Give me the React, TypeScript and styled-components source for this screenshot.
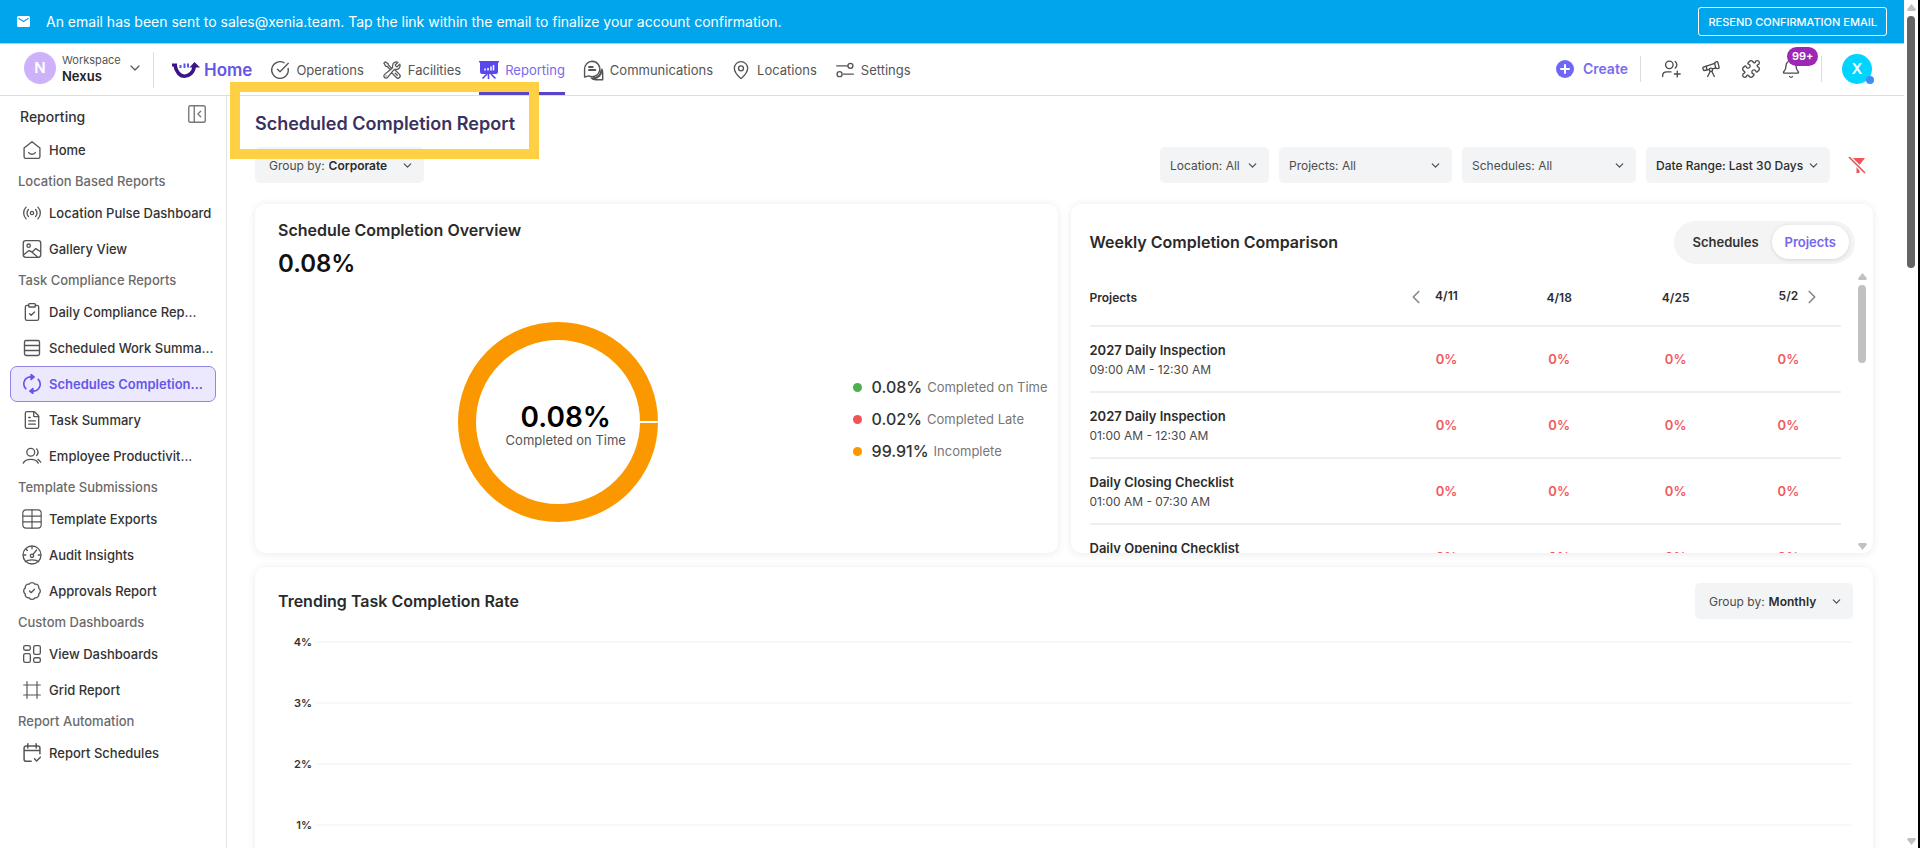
import React, { useState } from "react";
import styled, { createGlobalStyle, css } from "styled-components";
import {
  BadgeCheck,
  Bell,
  ChevronDown,
  ChevronLeft,
  ChevronRight,
  CircleCheckBig,
  ClipboardCheck,
  FileText,
  Frame,
  MapPin,
  PanelLeftClose,
  Puzzle,
  Radio,
  Rows3,
  Telescope,
} from "lucide-react";
import { HiOutlineWrenchScrewdriver } from "react-icons/hi2";

const GlobalStyle = createGlobalStyle`
  *, *::before, *::after { box-sizing: border-box; }
  body { margin: 0; overflow: hidden; background: #fff; }
  body, button, select, table {
    font-family: Inter, "Liberation Sans", sans-serif;
  }
  button, select { margin: 0; padding: 0; border: 0; background: none; color: inherit; cursor: pointer; }
  a { color: inherit; text-decoration: none; }
  h1, h2, p, ul { margin: 0; padding: 0; }
  ul { list-style: none; }
  svg { display: block; flex: none; }
`;

/* ---------- shell ---------- */

const Window = styled.div`
  display: flex;
  height: 100vh;
  overflow: hidden;
  border-right: 2px solid #000;
`;

const Page = styled.div`
  flex: 1;
  min-width: 0;
  display: flex;
  flex-direction: column;
`;

const Body = styled.div`
  flex: 1;
  min-height: 0;
  display: flex;
`;

const ScrollTrack = styled.div<{ $inset?: boolean }>`
  display: flex;
  flex-direction: column;
  align-items: center;
  width: 14px;
  padding: 4px 0 3px;
  background: #fff;
  ${(p) =>
    p.$inset &&
    css`
      width: 12px;
      padding: 2px 0 3px;
    `}
`;

const ScrollThumb = styled.div<{ $inset?: boolean }>`
  width: 8px;
  height: ${(p) => (p.$inset ? 78 : 252)}px;
  margin: 5px 0 auto;
  border-radius: 4px;
  background: ${(p) => (p.$inset ? "#c1c1c1" : "#636363")};
`;

const ScrollArrow = ({ down }: { down?: boolean }) => (
  <svg width="9" height="7" viewBox="0 0 9 7" fill="#c1c1c1">
    <path d={down ? "M1 0h7l1 1.500-4.500 5.500L0 1.500z" : "M4.500 0 9 5.500 8 7H1L0 5.500z"} />
  </svg>
);

/* ---------- banner ---------- */

const Banner = styled.div`
  display: flex;
  align-items: center;
  height: 44px;
  padding: 0 17px;
  gap: 16px;
  background: #00a5ec;
  border-bottom: 1px solid #9adcf8;
  color: #fff;
  font-size: 14px;
`;

const BannerText = styled.p`
  flex: 1;
`;

const ResendButton = styled.button`
  height: 29px;
  padding: 0 9px;
  border: 1px solid #fff;
  border-radius: 3px;
  font-size: 11px;
  font-weight: 500;
`;

/* ---------- header ---------- */

const Header = styled.header`
  display: flex;
  align-items: center;
  height: 52px;
  padding-left: 24px;
  padding-right: 32px;
  border-bottom: 1px solid #dedede;
`;

const Avatar = styled.span<{ $tone: string; $size: number }>`
  display: flex;
  align-items: center;
  justify-content: center;
  width: ${(p) => p.$size}px;
  height: ${(p) => p.$size}px;
  border-radius: 50%;
  background: ${(p) => p.$tone};
  color: #fff;
  font-size: 15px;
  font-weight: 600;
`;

const WorkspaceButton = styled.button`
  display: flex;
  align-items: center;
  gap: 6px;
  width: 129px;
  padding-bottom: 4px;
  text-align: left;
  color: #555;
`;

const WorkspaceName = styled.span`
  font-size: 11px;
  line-height: 16px;

  strong {
    display: block;
    color: #222;
    font-size: 13px;
    font-weight: 600;
  }
`;

const VRule = styled.span<{ $tall?: boolean }>`
  width: 1px;
  height: ${(p) => (p.$tall ? 36 : 26)}px;
  background: #dcdcdc;
`;

const Nav = styled.nav`
  flex: 1;
  align-self: stretch;
  display: flex;
  gap: 18px;
  padding-left: 18px;
`;

const NavLink = styled.a<{ $active?: boolean; $brand?: boolean }>`
  display: flex;
  align-items: center;
  gap: 6px;
  padding-top: 4px;
  border-bottom: 3px solid ${(p) => (p.$active ? "#5a45c9" : "transparent")};
  color: ${(p) => (p.$active ? "#7a68f0" : "#555")};
  font-size: 13px;

  ${(p) =>
    p.$brand &&
    css`
      gap: 4px;
      color: #6555e8;
      font-size: 17px;
      font-weight: 600;
    `}
`;

const Actions = styled.div`
  display: flex;
  align-items: center;
  gap: 20px;
  padding-bottom: 2px;
  color: #4a4a4a;
`;

const CreateButton = styled.button`
  display: flex;
  align-items: center;
  gap: 9px;
  margin-right: -8px;
  color: #7a6cf0;
  font-size: 14px;
  font-weight: 600;
`;

const IconButton = styled.button`
  position: relative;
  display: flex;
  color: inherit;
`;

const CountBadge = styled.span`
  position: absolute;
  top: -12px;
  left: 6px;
  height: 19px;
  padding: 0 5px;
  border-radius: 10px;
  background: #9b27b3;
  color: #fff;
  font-size: 11px;
  font-weight: 600;
  line-height: 19px;
`;

const PresenceDot = styled.span`
  position: absolute;
  right: -2px;
  bottom: 0;
  width: 8px;
  height: 8px;
  border-radius: 50%;
  background: #3f8cf3;
`;

/* ---------- sidebar ---------- */

const Sidebar = styled.aside`
  flex: none;
  width: 227px;
  padding: 0 10px;
  border-right: 1px solid #e4e4e4;
  color: #333;
`;

const SidebarHead = styled.div`
  display: flex;
  align-items: center;
  justify-content: space-between;
  height: 36px;
  padding: 4px 8px 0 10px;
  font-size: 14px;
  font-weight: 500;

  button {
    padding-bottom: 4px;
    color: #777;
  }
`;

const SectionLabel = styled.p`
  padding-left: 8px;
  color: #6b6b6b;
  font-size: 13px;
  font-weight: 500;
  line-height: 27px;
`;

const SideLink = styled.a<{ $active?: boolean }>`
  display: flex;
  align-items: center;
  gap: 7px;
  height: 36px;
  width: 206px;
  padding-left: 11px;
  border: 1px solid transparent;
  border-radius: 7px;
  font-size: 13px;
  font-weight: 500;
  white-space: nowrap;

  svg {
    color: #555;
  }

  ${(p) =>
    p.$active &&
    css`
      border-color: #8f86e6;
      background: #ece9fe;
      color: #6456ea;
      font-weight: 600;
      svg {
        color: #6456ea;
      }
    `}
`;

/* ---------- main ---------- */

const Main = styled.main`
  position: relative;
  flex: 1;
  min-width: 0;
  display: flex;
  flex-direction: column;
  padding: 8px 31px 0 28px;
  overflow: hidden;
`;

const PageTitle = styled.h1`
  height: 44px;
  color: #3b3160;
  font-size: 18px;
  font-weight: 600;
  line-height: 40px;
`;

const Highlight = styled.div`
  position: absolute;
  z-index: 2;
  top: 82px;
  left: 230px;
  width: 309px;
  height: 77px;
  border: 10px solid #ffd043;
  pointer-events: none;
`;

const FilterRow = styled.div`
  display: flex;
  align-items: center;
  gap: 10px;
  margin-top: 3px;
  color: #444;
`;

const Spacer = styled.span`
  flex: 1;
`;

const SelectBox = styled.label<{ $width: number; $wide?: boolean }>`
  display: flex;
  align-items: center;
  width: ${(p) => p.$width}px;
  height: 36px;
  padding: 0 10px 0 ${(p) => (p.$wide ? 14 : 10)}px;
  border-radius: 5px;
  background: #f3f4f6;
  color: #4c4c4c;
  font-size: 12px;
`;

const Select = styled.select<{ $strong?: boolean; $medium?: boolean }>`
  flex: 1;
  min-width: 0;
  appearance: none;
  margin-left: ${(p) => (p.$strong ? 4 : 0)}px;
  color: ${(p) => (p.$strong || p.$medium ? "#2c2c2c" : "inherit")};
  font-size: 12px;
  font-weight: ${(p) => (p.$strong ? 600 : p.$medium ? 500 : 400)};
`;

const ClearFilters = styled.button`
  margin: 0 7px 0 8px;
`;

const CardRow = styled.div`
  display: grid;
  grid-template-columns: 1fr 1fr;
  gap: 13px;
  margin: 21px 0 14px;
`;

const Card = styled.section`
  display: flex;
  flex-direction: column;
  height: 349px;
  border-radius: 10px;
  background: #fff;
  box-shadow: 0 1px 8px rgba(0, 0, 0, 0.09);
  overflow: hidden;
`;

const CardTitle = styled.h2`
  color: #2a2a2a;
  font-size: 16px;
  font-weight: 600;
  line-height: 24px;
`;

const OverviewHead = styled.div`
  padding: 14px 23px 0;
`;

const BigValue = styled.p`
  color: #111;
  font-size: 24px;
  font-weight: 600;
  line-height: 43px;
`;

const OverviewBody = styled.div`
  flex: 1;
  display: flex;
  align-items: center;
  padding-right: 10px;
`;

const DonutArea = styled.div`
  flex: 1;
  display: flex;
  justify-content: center;
  padding: 12px 0 6px 8px;
`;

const Donut = styled.div`
  position: relative;
`;

const DonutLabel = styled.div`
  position: absolute;
  inset: 0;
  display: flex;
  flex-direction: column;
  align-items: center;
  justify-content: center;
  padding: 6px 0 0 16px;
  color: #555;
  font-size: 13px;
  line-height: 16px;

  strong {
    color: #000;
    font-size: 28px;
    font-weight: 600;
    line-height: 30px;
  }
`;

const Legend = styled.ul`
  line-height: 32px;
  color: #777;
  font-size: 13px;
`;

const LegendItem = styled.li<{ $tone: string }>`
  display: flex;
  align-items: center;

  &::before {
    content: "";
    width: 9px;
    height: 9px;
    margin-right: 10px;
    border-radius: 50%;
    background: ${(p) => p.$tone};
  }

  strong {
    margin-right: 5px;
    color: #333;
    font-size: 16px;
    font-weight: 500;
  }
`;

const WeeklyHead = styled.div`
  display: flex;
  align-items: center;
  justify-content: space-between;
  height: 67px;
  padding: 9px 18px 0 19px;
`;

const Toggle = styled.div`
  display: flex;
  align-items: center;
  height: 43px;
  padding: 0 6px;
  border-radius: 22px;
  background: #f4f4f4;
`;

const ToggleButton = styled.button<{ $on: boolean }>`
  height: 34px;
  padding: 0 13px;
  border-radius: 17px;
  color: ${(p) => (p.$on ? "#7567ee" : "#333")};
  background: ${(p) => (p.$on ? "#fff" : "transparent")};
  box-shadow: ${(p) => (p.$on ? "0 1px 4px rgba(0, 0, 0, 0.12)" : "none")};
  font-size: 13px;
  font-weight: 600;
`;

const WeeklyBody = styled.div`
  flex: 1;
  min-height: 0;
  display: flex;
  padding: 0 5px 0 19px;
`;

const TableClip = styled.div`
  flex: 1;
  overflow: hidden;
  padding-right: 15px;
`;

const Table = styled.table`
  width: 100%;
  table-layout: fixed;
  border-collapse: collapse;
  color: #2c2c2c;
  font-size: 13px;

  th,
  td {
    height: 66px;
    padding: 0;
    border-bottom: 2px solid #efefef;
    text-align: center;
    font-weight: 600;
  }

  tbody th {
    padding-top: 2px;
  }

  thead th {
    height: 55px;
    padding-bottom: 2px;
    font-size: 12px;
  }

  th:first-child {
    text-align: left;
  }
`;

const RowTime = styled.span`
  display: block;
  color: #4a4a4a;
  font-size: 12px;
  font-weight: 400;
  line-height: 19px;
`;

const RowName = styled.span`
  display: block;
  line-height: 19px;
`;

const Rate = styled.td`
  color: #f2595d;
`;

const WeekHead = styled.span`
  position: relative;
  display: inline-block;
  padding-bottom: 4px;
`;

const PageArrow = styled.button<{ $side: "left" | "right" }>`
  position: absolute;
  top: -2px;
  ${(p) => (p.$side === "left" ? "right: 100%; padding-right: 8px;" : "left: 100%; padding-left: 3px;")}
  color: #888;
`;

const TrendCard = styled(Card)`
  flex: none;
  height: auto;
  padding: 16px 20px 24px 23px;
`;

const TrendHead = styled.div`
  display: flex;
  align-items: center;
  justify-content: space-between;
`;

const TrendPlot = styled.div`
  margin-top: 6px;
`;

const TrendTick = styled.div`
  display: flex;
  align-items: center;
  gap: 4px;
  height: 33px;
  margin-bottom: 28px;
  color: #333;
  font-size: 11px;
  font-weight: 600;

  span {
    width: 34px;
    text-align: right;
  }

  &::after {
    content: "";
    flex: 1;
    height: 2px;
    margin-right: 2px;
    background: #f8f8f8;
  }
`;

/* ---------- drawn icons ---------- */

type IconProps = { size?: number; width?: number; children: React.ReactNode };

const Stroke = ({ size = 20, width = 1.6, children }: IconProps) => (
  <svg
    width={size}
    height={size}
    viewBox="0 0 24 24"
    fill="none"
    stroke="currentColor"
    strokeWidth={width}
    strokeLinecap="round"
    strokeLinejoin="round"
  >
    {children}
  </svg>
);

const MailIcon = () => (
  <svg width="13" height="11" viewBox="0 0 13 11">
    <rect width="13" height="11" rx="1.500" fill="#fff" />
    <path d="M1.500 2.200 6.500 5.500l5-3.300" fill="none" stroke="#00a5ec" strokeWidth="1.200" />
  </svg>
);

const XeniaLogo = () => (
  <svg width="28" height="18" viewBox="0 0 28 18" fill="none">
    <path d="M0 4h5" stroke="#3b1585" strokeWidth="3" />
    <path d="M3 4C4 11 8 15.200 12.500 15.200s9-3.500 9.700-9.700" stroke="#3b1585" strokeWidth="3.600" />
    <path d="M17.500 6.500 22.500 1l5.500 5.500z" fill="#3b1585" />
    <path d="M8.500 4v3M12.500 2.500v4.500M16 2.500v4" stroke="#5b50ee" strokeWidth="2" />
  </svg>
);

const PresentationIcon = () => (
  <svg width="20" height="20" viewBox="0 0 20 20" fill="none">
    <path d="M0 1h20v1.500h-1V12a2 2 0 0 1-2 2H3a2 2 0 0 1-2-2V2.500H0z" fill="#5a48ee" />
    <path d="M9.500 14v5M8 14l-4.500 4.500M12 14l4.500 4.500" stroke="#5a48ee" strokeWidth="1.600" />
    <path d="M6 10.500V8.500M9 10.500V8M12 10.500V6.500M14.500 10.500V5" stroke="#fff" strokeWidth="1.500" />
  </svg>
);

const ChatIcon = () => (
  <Stroke size={21} width={1.6}>
    <path d="M10.500 1.500a8.800 8.800 0 1 1-4 16.700L1.800 19.500V10.500a8.800 8.800 0 0 1 8.700-9z" />
    <path d="M7 8h4M7 11.500h7" strokeWidth="2.400" />
    <path d="M21.500 10.500a8 8 0 0 1 1 4v8h-8a8 8 0 0 1-5-2" />
    <path d="M21 12c0 5-4 9-9.500 9" strokeWidth="2.400" />
  </Stroke>
);

const SlidersIcon = () => (
  <Stroke>
    <path d="M2 7h13M10 17h12" />
    <circle cx="18.500" cy="7" r="3" />
    <circle cx="5.500" cy="17" r="3" />
  </Stroke>
);

const AddIcon = () => (
  <svg width="18" height="18" viewBox="0 0 18 18">
    <circle cx="9" cy="9" r="9" fill="#7066f5" />
    <path d="M9 5v8M5 9h8" stroke="#fff" strokeWidth="2" strokeLinecap="round" />
  </svg>
);

const InviteIcon = () => (
  <Stroke>
    <circle cx="10" cy="7" r="4.500" />
    <path d="M17 3a5 5 0 0 1 0 8M2 21v-1c0-3 2.500-4.500 5-4.500h5M19.500 14.500v7M16 18h7" />
  </Stroke>
);

const HomeSmileIcon = () => (
  <Stroke>
    <path d="M2.500 9.500 12 2l9.500 7.500V20a2 2 0 0 1-2 2h-15a2 2 0 0 1-2-2zM8 15c1.200 2.800 6.800 2.800 8 0" />
  </Stroke>
);

const GalleryIcon = () => (
  <Stroke>
    <rect x="1.500" y="2" width="21" height="20" rx="3" />
    <circle cx="8" cy="8" r="2" />
    <path d="m2 19 6-5 3 1 8 7M12 16l4.500-4.500L22 15" />
  </Stroke>
);

const CycleIcon = () => (
  <Stroke width={2}>
    <path d="M13 3.500H10a8.300 8.300 0 0 0-5.500 14M11 20.500h3A8.300 8.300 0 0 0 19.500 6.500" />
    <path d="m11 .8 3.500 2.700L11 6.500zM13 17.500l-3.500 3 3.500 2.700z" fill="currentColor" />
  </Stroke>
);

const PeopleIcon = () => (
  <Stroke>
    <circle cx="10.500" cy="7.500" r="4.700" />
    <path d="M17.500 3.500a6 6 0 0 1 0 8M1.500 20.500c3-6 15-6 18 0M19 16c1.500.8 2.500 2 3.500 3.500" />
  </Stroke>
);

const GridTableIcon = () => (
  <Stroke width={1.4}>
    <rect x="1" y="1" width="22" height="22" rx="4" />
    <path d="M12 1v22M1 8.500h22M1 15.500h22" />
  </Stroke>
);

const GaugeIcon = () => (
  <Stroke>
    <circle cx="12" cy="12" r="10.800" />
    <path d="M4 20c3-3 13-3 16 0M13 11.500 17.500 6M12 2v2.500M2 12h2.500M19.500 12H22M5 5l1.500 1.500" />
    <circle cx="12" cy="13" r="2" />
  </Stroke>
);

const WidgetsIcon = () => (
  <Stroke>
    <rect x="2" y="2" width="8" height="5.500" rx="2" />
    <rect x="2" y="11.500" width="8" height="10.500" rx="2" />
    <rect x="14" y="2" width="8" height="10.500" rx="2" />
    <rect x="14" y="16.500" width="8" height="5.500" rx="2" />
  </Stroke>
);

const CalendarIcon = () => (
  <Stroke width={1.8}>
    <path d="M21.500 13V6a2.500 2.500 0 0 0-2.500-2.500H5A2.500 2.500 0 0 0 2.500 6v13.500A2.500 2.500 0 0 0 5 22h6M2.500 9h19M7 1v5M17 1v5M15 19l2.500 2.500L22 17" />
  </Stroke>
);

const ClearFilterIcon = () => (
  <svg width="18" height="18" viewBox="0 0 18 18">
    <path d="M4 2h13l-5.500 7v8h-3V9z" fill="#ee5558" />
    <path d="M0 0l18 18" stroke="#fff" strokeWidth="4" />
    <path d="M1 1l16 16" stroke="#ee5558" strokeWidth="1.700" />
  </svg>
);

/* ---------- data ---------- */

const navItems = [
  { label: "Operations", icon: <CircleCheckBig size={20} strokeWidth={1.6} /> },
  { label: "Facilities", icon: <HiOutlineWrenchScrewdriver size={20} /> },
  { label: "Reporting", icon: <PresentationIcon />, active: true },
  { label: "Communications", icon: <ChatIcon /> },
  { label: "Locations", icon: <MapPin size={20} strokeWidth={1.6} /> },
  { label: "Settings", icon: <SlidersIcon /> },
];

const line = { size: 20, strokeWidth: 1.6 };

const sections = [
  { title: "", items: [{ label: "Home", icon: <HomeSmileIcon /> }] },
  {
    title: "Location Based Reports",
    items: [
      { label: "Location Pulse Dashboard", icon: <Radio {...line} /> },
      { label: "Gallery View", icon: <GalleryIcon /> },
    ],
  },
  {
    title: "Task Compliance Reports",
    items: [
      { label: "Daily Compliance Rep...", icon: <ClipboardCheck {...line} /> },
      { label: "Scheduled Work Summa...", icon: <Rows3 {...line} /> },
      { label: "Schedules Completion...", icon: <CycleIcon />, active: true },
      { label: "Task Summary", icon: <FileText {...line} /> },
      { label: "Employee Productivit...", icon: <PeopleIcon /> },
    ],
  },
  {
    title: "Template Submissions",
    items: [
      { label: "Template Exports", icon: <GridTableIcon /> },
      { label: "Audit Insights", icon: <GaugeIcon /> },
      { label: "Approvals Report", icon: <BadgeCheck {...line} /> },
    ],
  },
  {
    title: "Custom Dashboards",
    items: [
      { label: "View Dashboards", icon: <WidgetsIcon /> },
      { label: "Grid Report", icon: <Frame size={20} strokeWidth={1.4} /> },
    ],
  },
  { title: "Report Automation", items: [{ label: "Report Schedules", icon: <CalendarIcon /> }] },
];

const legend = [
  { value: "0.08%", label: "Completed on Time", tone: "#4caf50" },
  { value: "0.02%", label: "Completed Late", tone: "#ef5357" },
  { value: "99.91%", label: "Incomplete", tone: "#fb9800" },
];

const rows = [
  { name: "2027 Daily Inspection", time: "09:00 AM - 12:30 AM" },
  { name: "2027 Daily Inspection", time: "01:00 AM - 12:30 AM" },
  { name: "Daily Closing Checklist", time: "01:00 AM - 07:30 AM" },
  { name: "Daily Opening Checklist", time: "" },
];

const filters = [
  { text: "Location: All", width: 109 },
  { text: "Projects: All", width: 173 },
  { text: "Schedules: All", width: 174 },
  { text: "Date Range: Last 30 Days", width: 184, medium: true },
];

type SelectFieldProps = { label?: string; text: string; width: number; medium?: boolean };

const SelectField = ({ label, text, width, medium }: SelectFieldProps) => (
  <SelectBox $width={width} $wide={!!label}>
    {label}
    <Select $strong={!!label} $medium={medium} aria-label={label ? undefined : text} defaultValue={text}>
      <option>{text}</option>
    </Select>
    <ChevronDown size={13} strokeWidth={2.2} />
  </SelectBox>
);

export default function App() {
  const [tab, setTab] = useState("Projects");

  return (
    <Window>
      <GlobalStyle />
      <Page>
        <Banner>
          <MailIcon />
          <BannerText>
            An email has been sent to sales@xenia.team. Tap the link within the email to finalize your account
            confirmation.
          </BannerText>
          <ResendButton>RESEND CONFIRMATION EMAIL</ResendButton>
        </Banner>

        <Header>
          <WorkspaceButton>
            <Avatar $tone="#cdb2fb" $size={32}>N</Avatar>
            <WorkspaceName>
              Workspace <strong>Nexus</strong>
            </WorkspaceName>
            <ChevronDown size={16} strokeWidth={1.8} />
          </WorkspaceButton>
          <VRule $tall />
          <Nav>
            <NavLink href="#" $brand>
              <XeniaLogo />
              Home
            </NavLink>
            {navItems.map((item) => (
              <NavLink key={item.label} href="#" $active={item.active}>
                {item.icon}
                {item.label}
              </NavLink>
            ))}
          </Nav>
          <Actions>
            <CreateButton>
              <AddIcon />
              Create
            </CreateButton>
            <VRule />
            <IconButton aria-label="Invite"><InviteIcon /></IconButton>
            <IconButton aria-label="Explore"><Telescope size={20} strokeWidth={1.6} /></IconButton>
            <IconButton aria-label="Integrations"><Puzzle size={20} strokeWidth={1.6} /></IconButton>
            <IconButton aria-label="Notifications">
              <Bell size={20} strokeWidth={1.6} />
              <CountBadge>99+</CountBadge>
            </IconButton>
            <VRule />
            <IconButton aria-label="Account">
              <Avatar $tone="#00d4ff" $size={30}>X</Avatar>
              <PresenceDot />
            </IconButton>
          </Actions>
        </Header>

        <Body>
          <Sidebar>
            <SidebarHead>
              Reporting
              <button aria-label="Collapse sidebar">
                <PanelLeftClose size={22} strokeWidth={1.5} />
              </button>
            </SidebarHead>
            {sections.map((section) => (
              <React.Fragment key={section.title}>
                {section.title && <SectionLabel>{section.title}</SectionLabel>}
                {section.items.map((item: { label: string; icon: React.ReactNode; active?: boolean }) => (
                  <SideLink key={item.label} href="#" $active={item.active}>
                    {item.icon}
                    {item.label}
                  </SideLink>
                ))}
              </React.Fragment>
            ))}
          </Sidebar>

          <Main>
            <PageTitle>Scheduled Completion Report</PageTitle>
            <FilterRow>
              <SelectField label="Group by:" text="Corporate" width={169} />
              <Spacer />
              {filters.map((filter) => (
                <SelectField key={filter.text} {...filter} />
              ))}
              <ClearFilters aria-label="Clear filters">
                <ClearFilterIcon />
              </ClearFilters>
            </FilterRow>

            <CardRow>
              <Card>
                <OverviewHead>
                  <CardTitle>Schedule Completion Overview</CardTitle>
                  <BigValue>0.08%</BigValue>
                </OverviewHead>
                <OverviewBody>
                  <DonutArea>
                    <Donut>
                      <svg width="200" height="200" viewBox="0 0 200 200">
                        <circle cx="100" cy="100" r="91" fill="none" stroke="#fb9800" strokeWidth="18" />
                        <path d="M182 100h18" stroke="#fff" strokeWidth="2" />
                      </svg>
                      <DonutLabel>
                        <strong>0.08%</strong>
                        Completed on Time
                      </DonutLabel>
                    </Donut>
                  </DonutArea>
                  <Legend>
                    {legend.map((item) => (
                      <LegendItem key={item.label} $tone={item.tone}>
                        <strong>{item.value}</strong>
                        {item.label}
                      </LegendItem>
                    ))}
                  </Legend>
                </OverviewBody>
              </Card>

              <Card>
                <WeeklyHead>
                  <CardTitle>Weekly Completion Comparison</CardTitle>
                  <Toggle>
                    {["Schedules", "Projects"].map((name) => (
                      <ToggleButton key={name} $on={tab === name} onClick={() => setTab(name)}>
                        {name}
                      </ToggleButton>
                    ))}
                  </Toggle>
                </WeeklyHead>
                <WeeklyBody>
                  <TableClip>
                    <Table>
                      <colgroup>
                        <col width="40%" />
                        <col width="15%" />
                        <col width="15%" />
                        <col width="16%" />
                        <col width="14%" />
                      </colgroup>
                      <thead>
                        <tr>
                          <th>Projects</th>
                          <th>
                            <WeekHead>
                              <PageArrow $side="left" aria-label="Previous weeks">
                                <ChevronLeft size={22} strokeWidth={1.8} />
                              </PageArrow>
                              4/11
                            </WeekHead>
                          </th>
                          <th>4/18</th>
                          <th>4/25</th>
                          <th>
                            <WeekHead>
                              5/2
                              <PageArrow $side="right" aria-label="Next weeks">
                                <ChevronRight size={22} strokeWidth={1.8} />
                              </PageArrow>
                            </WeekHead>
                          </th>
                        </tr>
                      </thead>
                      <tbody>
                        {rows.map((row, index) => (
                          <tr key={index}>
                            <th scope="row">
                              <RowName>{row.name}</RowName>
                              <RowTime>{row.time || "\u00a0"}</RowTime>
                            </th>
                            <Rate>0%</Rate>
                            <Rate>0%</Rate>
                            <Rate>0%</Rate>
                            <Rate>0%</Rate>
                          </tr>
                        ))}
                      </tbody>
                    </Table>
                  </TableClip>
                  <ScrollTrack $inset>
                    <ScrollArrow />
                    <ScrollThumb $inset />
                    <ScrollArrow down />
                  </ScrollTrack>
                </WeeklyBody>
              </Card>
            </CardRow>

            <TrendCard>
              <TrendHead>
                <CardTitle>Trending Task Completion Rate</CardTitle>
                <SelectField label="Group by:" text="Monthly" width={158} />
              </TrendHead>
              <TrendPlot>
                {["4%", "3%", "2%", "1%"].map((tick) => (
                  <TrendTick key={tick}>
                    <span>{tick}</span>
                  </TrendTick>
                ))}
              </TrendPlot>
            </TrendCard>
          </Main>
        </Body>
      </Page>
      <ScrollTrack>
        <ScrollArrow />
        <ScrollThumb />
        <ScrollArrow down />
      </ScrollTrack>
      <Highlight />
    </Window>
  );
}
